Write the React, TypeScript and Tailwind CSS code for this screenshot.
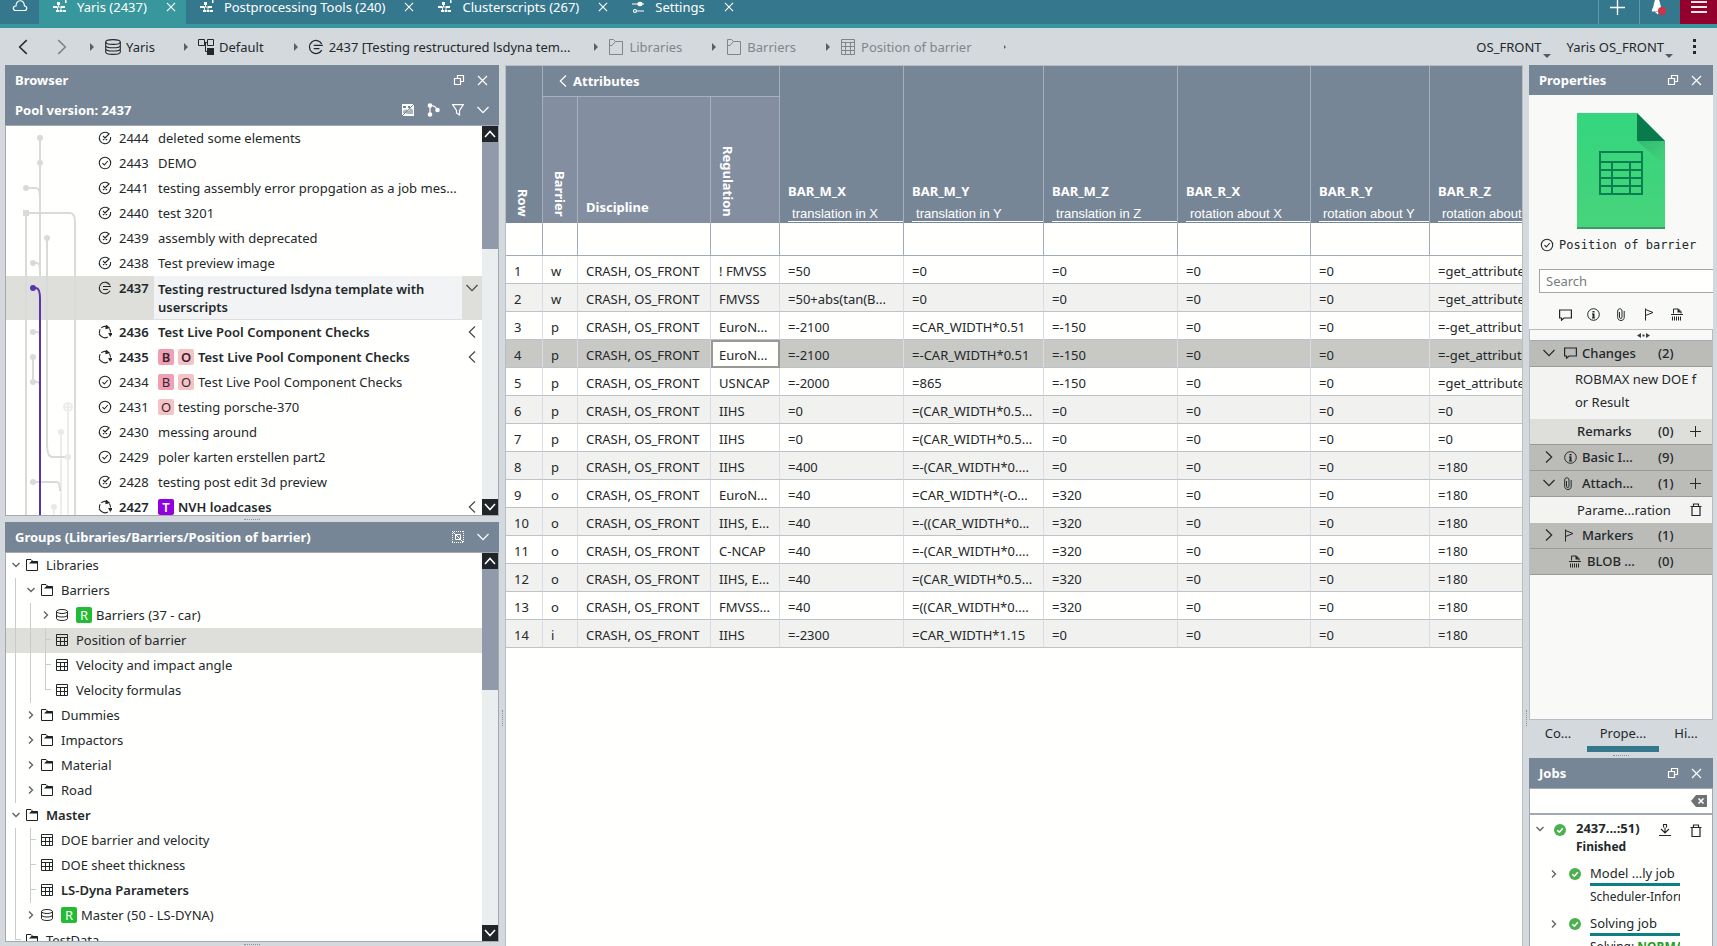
import React from "react";

type Status = "failed" | "ok" | "edit" | "live";

interface Tag {
  letter: string;
  className: string;
}

interface Version {
  id: number;
  name: string;
  status: Status;
  tags?: Tag[];
  bold?: boolean;
  collapsed?: boolean;
}

interface TreeItem {
  label: string;
  icon: "folder" | "table" | "db";
  guides: number;
  toggle: "open" | "closed" | "branch" | "last";
  tag?: boolean;
  bold?: boolean;
  selected?: boolean;
}

const tagB = { letter: "B", className: "bg-[#f19fb5] text-[#3a2530]" };
const tagO = { letter: "O", className: "bg-[#f5c3c6] text-[#3a2530]" };
const tagT = { letter: "T", className: "bg-[#9300e0] text-white" };

const versions: Version[] = [
  { id: 2444, name: "deleted some elements", status: "failed" },
  { id: 2443, name: "DEMO", status: "ok" },
  { id: 2441, name: "testing assembly error propgation as a job mes...", status: "failed" },
  { id: 2440, name: "test 3201", status: "failed" },
  { id: 2439, name: "assembly with deprecated", status: "failed" },
  { id: 2438, name: "Test preview image", status: "failed" },
  { id: 2437, name: "Testing restructured lsdyna template with userscripts", status: "edit", bold: true },
  { id: 2436, name: "Test Live Pool Component Checks", status: "live", bold: true, collapsed: true },
  { id: 2435, name: "Test Live Pool Component Checks", status: "live", tags: [tagB, tagO], bold: true, collapsed: true },
  { id: 2434, name: "Test Live Pool Component Checks", status: "ok", tags: [tagB, tagO] },
  { id: 2431, name: "testing porsche-370", status: "ok", tags: [tagO] },
  { id: 2430, name: "messing around", status: "failed" },
  { id: 2429, name: "poler karten erstellen part2", status: "ok" },
  { id: 2428, name: "testing post edit 3d preview", status: "failed" },
  { id: 2427, name: "NVH loadcases", status: "live", tags: [tagT], bold: true, collapsed: true },
];

const tree: TreeItem[] = [
  { label: "Libraries", icon: "folder", guides: 0, toggle: "open" },
  { label: "Barriers", icon: "folder", guides: 1, toggle: "open" },
  { label: "Barriers (37 - car)", icon: "db", guides: 2, toggle: "closed", tag: true },
  { label: "Position of barrier", icon: "table", guides: 2, toggle: "branch", selected: true },
  { label: "Velocity and impact angle", icon: "table", guides: 2, toggle: "branch" },
  { label: "Velocity formulas", icon: "table", guides: 2, toggle: "last" },
  { label: "Dummies", icon: "folder", guides: 1, toggle: "closed" },
  { label: "Impactors", icon: "folder", guides: 1, toggle: "closed" },
  { label: "Material", icon: "folder", guides: 1, toggle: "closed" },
  { label: "Road", icon: "folder", guides: 1, toggle: "closed" },
  { label: "Master", icon: "folder", guides: 0, toggle: "open", bold: true },
  { label: "DOE barrier and velocity", icon: "table", guides: 1, toggle: "branch" },
  { label: "DOE sheet thickness", icon: "table", guides: 1, toggle: "branch" },
  { label: "LS-Dyna Parameters", icon: "table", guides: 1, toggle: "branch", bold: true },
  { label: "Master (50 - LS-DYNA)", icon: "db", guides: 1, toggle: "closed", tag: true },
  { label: "TestData", icon: "folder", guides: 0, toggle: "last" },
];

const valueColumns = [
  ["BAR_M_X", "translation in X"],
  ["BAR_M_Y", "translation in Y"],
  ["BAR_M_Z", "translation in Z"],
  ["BAR_R_X", "rotation about X"],
  ["BAR_R_Y", "rotation about Y"],
  ["BAR_R_Z", "rotation about Z"],
];

const rows = [
  ["w", "! FMVSS", "=50", "=0", "=0", "=0", "=0", "=get_attribute("],
  ["w", "FMVSS", "=50+abs(tan(B...", "=0", "=0", "=0", "=0", "=get_attribute("],
  ["p", "EuroN...", "=-2100", "=CAR_WIDTH*0.51", "=-150", "=0", "=0", "=-get_attribute("],
  ["p", "EuroN...", "=-2100", "=-CAR_WIDTH*0.51", "=-150", "=0", "=0", "=-get_attribute("],
  ["p", "USNCAP", "=-2000", "=865", "=-150", "=0", "=0", "=get_attribute("],
  ["p", "IIHS", "=0", "=(CAR_WIDTH*0.5...", "=0", "=0", "=0", "=0"],
  ["p", "IIHS", "=0", "=(CAR_WIDTH*0.5...", "=0", "=0", "=0", "=0"],
  ["p", "IIHS", "=400", "=-(CAR_WIDTH*0....", "=0", "=0", "=0", "=180"],
  ["o", "EuroN...", "=40", "=CAR_WIDTH*(-O...", "=320", "=0", "=0", "=180"],
  ["o", "IIHS, E...", "=40", "=-((CAR_WIDTH*0...", "=320", "=0", "=0", "=180"],
  ["o", "C-NCAP", "=40", "=-(CAR_WIDTH*0....", "=320", "=0", "=0", "=180"],
  ["o", "IIHS, E...", "=40", "=(CAR_WIDTH*0.5...", "=320", "=0", "=0", "=180"],
  ["o", "FMVSS...", "=40", "=((CAR_WIDTH*0....", "=320", "=0", "=0", "=180"],
  ["i", "IIHS", "=-2300", "=CAR_WIDTH*1.15", "=0", "=0", "=0", "=180"],
];

/* ---------- icons ---------- */

const CloseIcon = ({ className = "w-[11px] h-[11px]" }) => (
  <svg viewBox="0 0 11 11" className={className} fill="none" stroke="currentColor" strokeWidth="1.2">
    <path d="M1 1l9 9M10 1l-9 9" />
  </svg>
);

const RestoreIcon = () => (
  <svg viewBox="0 0 12 12" className="w-[12px] h-[12px]" fill="none" stroke="currentColor" strokeWidth="1.2">
    <path d="M4.5 4.5V1.5h6v6h-3M1.5 4.5h6v6h-6z" />
  </svg>
);

const ChevronDown = ({ className = "w-[12px] h-[8px]" }) => (
  <svg viewBox="0 0 12 8" className={className} fill="none" stroke="currentColor" strokeWidth="1.2">
    <path d="M0.5 1L6 6.7 11.5 1" />
  </svg>
);

const ChevronRight = ({ className = "w-[8px] h-[12px]" }) => (
  <svg viewBox="0 0 8 12" className={className} fill="none" stroke="currentColor" strokeWidth="1.2">
    <path d="M1 0.5L6.7 6 1 11.5" />
  </svg>
);

const ChevronLeft = ({ className = "w-[8px] h-[12px]" }) => (
  <svg viewBox="0 0 8 12" className={className} fill="none" stroke="currentColor" strokeWidth="1.2">
    <path d="M7 0.5L1.3 6 7 11.5" />
  </svg>
);

const SmallDown = () => (
  <svg viewBox="0 0 8 6" className="w-2 h-[6px]" fill="none" stroke="currentColor" strokeWidth="1.4">
    <path d="M0.5 1L4 4.500 7.500 1" />
  </svg>
);

const SmallRight = () => (
  <svg viewBox="0 0 6 8" className="w-[6px] h-2" fill="none" stroke="currentColor" strokeWidth="1.4">
    <path d="M1 0.5L4.500 4 1 7.500" />
  </svg>
);

const ClusterIcon = () => (
  <svg viewBox="0 0 14 14" className="w-[14px] h-[14px]" fill="currentColor">
    <path d="M12 0h1.500v3H12zM4 2h3v3H4zM0 6h4v2H0zM8 6h4v2H8zM3 10h3v2H3zM10 10h3v2h-3zM7 10h2v2H7z" />
    <path d="M5.500 4v3M2 7h8M4.500 7v4M8 7v4M4.500 11h7" fill="none" stroke="currentColor" strokeWidth="0.900" />
  </svg>
);

const SettingsIcon = () => (
  <svg viewBox="0 0 13 14" className="w-[13px] h-[14px]" fill="none" stroke="currentColor" strokeWidth="1.2">
    <path d="M0 4h12M5 11h7" />
    <path d="M6 4a2 1.7 0 014 0a2 1.7 0 01-4 0z" fill="currentColor" />
    <circle cx="3" cy="11" r="1.5" />
  </svg>
);

const DatabaseIcon = ({ className = "w-[16px] h-[16px]" }) => (
  <svg viewBox="0 0 16 16" className={className} fill="none" stroke="currentColor" strokeWidth="1.1">
    <ellipse cx="8" cy="3" rx="7.3" ry="2.4" />
    <path d="M0.7 3v10c0 1.3 3 2.4 7.3 2.4s7.3-1.1 7.3-2.4V3M0.7 6.4C.7 7.700 3.700 8.700 8 8.700s7.300-1 7.300-2.300M0.700 9.700c0 1.300 3 2.300 7.300 2.300s7.300-1 7.300-2.300" />
  </svg>
);

const SmallDbIcon = () => (
  <svg viewBox="0 0 12 12" className="w-[12px] h-[12px] text-[#23282b]" fill="none" stroke="currentColor">
    <ellipse cx="6" cy="2.5" rx="5.500" ry="2" />
    <path d="M0.500 2.500v7c0 1.200 2.400 2 5.500 2s5.500-.8 5.500-2v-7M0.500 6c0 1.200 2.400 2 5.500 2s5.500-.8 5.500-2" />
  </svg>
);

const FolderIcon = () => (
  <svg viewBox="0 0 12 12" className="w-[12px] h-[12px] text-[#1d2225]">
    <path d="M0.500 11.500V0.500h4.500l2 2h4.500v9z" fill="none" stroke="currentColor" />
    <path d="M1 4.500h2L5.500 2h6v2.500z" fill="currentColor" />
  </svg>
);

const FolderOutline = () => (
  <svg viewBox="0 0 16 16" className="w-[16px] h-[16px]" fill="none" stroke="currentColor">
    <path d="M1.500 15.500V0.500h4l2 2h7v13zM1.500 6.500h2.500L7.500 2.500" />
  </svg>
);

const TableIcon = () => (
  <svg viewBox="0 0 12 12" className="w-[12px] h-[12px]" fill="none" stroke="currentColor">
    <path d="M0.500 0.500h11v11h-11zM0.500 3.500h11M0.500 7.500h11M4.500 3.500v8M8.500 3.500v8" />
  </svg>
);

const TableOutline = () => (
  <svg viewBox="0 0 16 16" className="w-[16px] h-[16px]" fill="none" stroke="currentColor">
    <path d="M1.500 0.500h13v15h-13zM1.500 3.500h13M1.500 7.500h13M1.500 11.500h13M5.500 3.500v12M10.500 3.500v12" />
  </svg>
);

const StatusIcon = ({ status, className = "w-[14px] h-[14px]" }: { status: Status; className?: string }) => (
  <svg viewBox="0 0 14 14" className={className} fill="none" stroke="currentColor" strokeWidth="1.1">
    {status === "ok" && (
      <>
        <circle cx="7" cy="7" r="5.700" />
        <path d="M4.500 7.200l1.800 1.800L9.800 5" />
      </>
    )}
    {status === "failed" && (
      <>
        <path d="M10.500 2.500A5.700 5.700 0 1 0 12.600 6M5 5l4 4M5 9l6.500-6.500" />
      </>
    )}
    {status === "edit" && <path d="M12 4.300A5.700 5.700 0 1 0 12 9.700M5 5.500h8M5 8.500h5" />}
    {status === "live" && (
      <>
        <path d="M3.300 2.900A5.500 5.500 0 0 1 9.300 1.900M1.700 8.700A5.500 5.500 0 0 1 2.200 4.300M9.800 12.100A5.500 5.500 0 0 1 3.500 11.400M11.300 3.500A5.500 5.500 0 0 1 12.400 7.500" />
        <path d="M8.300 0.500l2.700 2.200L8 3.500zM11 8.500l1.300 2.500L14 8.500zM1 9l2.800 2.800" fill="currentColor" />
      </>
    )}
  </svg>
);

const CommentIcon = () => (
  <svg viewBox="0 0 13 12" className="w-[13px] h-[12px]" fill="none" stroke="currentColor" strokeWidth="1.2">
    <path d="M0.600 1h11.800v8H5L2.500 11.200V9H0.600z" />
  </svg>
);

const InfoIcon = () => (
  <svg viewBox="0 0 13 13" className="w-[13px] h-[13px]" fill="none" stroke="currentColor">
    <circle cx="6.500" cy="6.500" r="5.800" />
    <path d="M6.500 5.500v4.500M6.500 3v1.500" strokeWidth="2" />
    <path d="M5 10h3M5 6h1.500" />
  </svg>
);

const ClipIcon = () => (
  <svg viewBox="0 0 8 13" className="w-[8px] h-[13px]" fill="none" stroke="currentColor">
    <path d="M2.500 4v5.200c0 1.800 2.500 1.800 2.500 0V3c0-3-4.300-3-4.300 0v6.500c0 4 6.500 4 6.500 0V3" />
  </svg>
);

const FlagIcon = () => (
  <svg viewBox="0 0 10 13" className="w-[10px] h-[13px]" fill="none" stroke="currentColor">
    <path d="M1.500 0.500v12M1.500 1.500L9 4.500 1.500 7.500" />
  </svg>
);

const ShredIcon = () => (
  <svg viewBox="0 0 12 13" className="w-[12px] h-[13px]" fill="none" stroke="currentColor">
    <path d="M2.500 5.500V1h5l2.500 2.500v2M0 6.500h12M1.500 8.500v4M3.500 8.500v4M5.500 8.500v4M7.500 8.500v4M9.500 8.500v4" />
    <path d="M6.500 0.500L10.500 4.500h-4z" fill="currentColor" stroke="none" />
  </svg>
);

const TrashIcon = () => (
  <svg viewBox="0 0 12 13" className="w-[12px] h-[13px]" fill="none" stroke="currentColor" strokeWidth="1.200">
    <path d="M0.500 3.500h11M3.500 3V1h5v2M2 3.500v9h8v-9" />
  </svg>
);

const PlusIcon = ({ className = "w-[11px] h-[11px]" }) => (
  <svg viewBox="0 0 11 11" className={className} fill="none" stroke="currentColor">
    <path d="M5.500 0v11M0 5.500h11" />
  </svg>
);

const DoneIcon = () => (
  <svg viewBox="0 0 12 12" className="w-[12px] h-[12px]">
    <circle cx="6" cy="6" r="6" fill="#4caf50" />
    <path d="M3.300 6.200l2 2 3.500-4" fill="none" stroke="#fff" strokeWidth="1.600" />
  </svg>
);

const SheetIcon = () => (
  <svg viewBox="0 0 88 116" className="w-[88px] h-[116px]">
    <defs>
      <linearGradient id="sheet" x1="0" y1="0" x2="0" y2="1">
        <stop offset="0" stopColor="#33d67e" />
        <stop offset="1" stopColor="#48d37b" />
      </linearGradient>
      <linearGradient id="fold" x1="0" y1="0" x2="1" y2="1">
        <stop offset="0" stopColor="#2fae6b" />
        <stop offset="1" stopColor="#48d37b" />
      </linearGradient>
    </defs>
    <path d="M0 0h60l28 28v88H0z" fill="url(#sheet)" />
    <path d="M60 28h28v24z" fill="url(#fold)" opacity="0.700" />
    <path d="M60 0l28 28H60z" fill="#097a4c" />
    <path d="M0 115h88" stroke="#3a9c68" strokeWidth="2" />
    <path
      d="M23 39h42v42H23zM23 49h42M23 57h42M23 65h42M23 73h42M35 49v32M53 49v32"
      fill="none"
      stroke="#06804f"
      strokeWidth="2"
    />
  </svg>
);

/* ---------- shared bits ---------- */

const Crumb = () => <span className="w-0 h-0 border-y-4 border-y-transparent border-l-4 border-l-[#5a6065]" />;

const DropMark = () => (
  <span className="self-end ml-px mb-[7px] w-0 h-0 border-x-4 border-x-transparent border-t-4 border-t-[#555b60]" />
);

const DotsH = () => <span className="w-4 border-t border-dotted border-[#8b9197]" />;
const DotsV = () => <span className="h-4 border-l border-dotted border-[#8b9197]" />;

const PanelHeader = ({ title }: { title: string }) => (
  <header className="flex items-center h-[30px] shrink-0 bg-[#778696] text-white pl-[10px] pr-[11px]">
    <h2 className="font-bold flex-1">{title}</h2>
    <button aria-label={`Detach ${title}`} className="mr-3">
      <RestoreIcon />
    </button>
    <button aria-label={`Close ${title}`}>
      <CloseIcon />
    </button>
  </header>
);

const Scrollbar = ({ thumb }: { thumb: string }) => (
  <div className="w-4 shrink-0 flex flex-col bg-[#ebeeee]">
    <button aria-label="Scroll up" className="h-4 shrink-0 bg-[#1f2529] text-white flex items-center justify-center">
      <svg viewBox="0 0 12 8" className="w-[12px] h-[8px]" fill="none" stroke="currentColor" strokeWidth="1.600">
        <path d="M1 7l5-5.500L11 7" />
      </svg>
    </button>
    <div className={`${thumb} bg-[#909aaa]`} />
    <div className="flex-1" />
    <button aria-label="Scroll down" className="h-4 shrink-0 bg-[#1f2529] text-white flex items-center justify-center">
      <svg viewBox="0 0 12 8" className="w-[12px] h-[8px]" fill="none" stroke="currentColor" strokeWidth="1.600">
        <path d="M1 1l5 5.500L11 1" />
      </svg>
    </button>
  </div>
);

const TagBadge = ({ letter, className }: Tag) => (
  <span className={`w-4 h-4 mr-1 shrink-0 rounded-[2px] flex items-center justify-center leading-4 ${className}`}>
    {letter}
  </span>
);

/* ---------- top ---------- */

const Tab = ({ label, active, icon }: { label: string; active?: boolean; icon?: React.ReactNode }) => (
  <div className={`flex h-6 items-start pl-[14px] pr-[10px] ${active ? "bg-[#38969d]" : ""}`}>
    <div className="flex items-center h-[14px]">
      {icon ?? <ClusterIcon />}
      <button className="ml-[10px] mr-[19px] leading-[14px] whitespace-nowrap">{label}</button>
      <button aria-label={`Close ${label}`}>
        <CloseIcon className="w-[10px] h-[10px]" />
      </button>
    </div>
  </div>
);

const TopBar = () => (
  <div className="flex h-7 shrink-0 bg-[#35778d] border-b-4 border-[#38969d] text-white">
    <button aria-label="Home" className="w-[39px] flex justify-center items-start">
      <svg viewBox="0 0 16 12" className="w-4 h-3" fill="none" stroke="currentColor" strokeWidth="1.200">
        <path d="M3.500 10.500h9c3 0 3-4.500 0-4.500C12 -1 4 -1 4 6c-4 0-3 4.500-.5 4.500z" />
      </svg>
    </button>
    <Tab label="Yaris (2437)" active />
    <Tab label="Postprocessing Tools (240)" />
    <Tab label="Clusterscripts (267)" />
    <Tab label="Settings" icon={<SettingsIcon />} />
    <div className="flex-1" />
    <button aria-label="New tab" className="w-[41px] pr-1 flex justify-center items-start border-l border-[#5f9cab]">
      <PlusIcon className="w-[15px] h-[15px]" />
    </button>
    <button aria-label="Notifications" className="w-[41px] pr-1 flex justify-center items-start border-l border-[#5f9cab]">
      <svg viewBox="0 0 16 16" className="w-4 h-4">
        <path d="M5 0h4c1.500 3 1.500 7 3 9.500v2H2V9.500C4 7 3.500 3 5 0zM5 12h4l-1 2.500z" fill="#fff" />
        <circle cx="12" cy="11" r="4" fill="#d0324a" />
      </svg>
    </button>
    <button aria-label="Menu" className="w-[37px] flex justify-center items-start bg-[#93002d]">
      <svg viewBox="0 0 16 14" className="w-4 h-[14px]" stroke="#f3e6ea" strokeWidth="2">
        <path d="M0 2h16M0 7h16M0 12h16" />
      </svg>
    </button>
  </div>
);

const Breadcrumbs = () => (
  <nav className="flex items-center h-[37px] shrink-0 pl-[18px] pr-5">
    <button aria-label="Back">
      <ChevronLeft className="w-[10px] h-[16px]" />
    </button>
    <button aria-label="Forward" className="ml-[29px] mr-[23px] text-[#7d8287]">
      <ChevronRight className="w-[10px] h-[16px]" />
    </button>
    <Crumb />
    <a href="#yaris" className="flex items-center gap-[5px] ml-[11px] mr-[29px]">
      <DatabaseIcon />
      Yaris
    </a>
    <Crumb />
    <a href="#default" className="flex items-center gap-[5px] ml-[10px] mr-[30px]">
      <svg viewBox="0 0 16 16" className="w-4 h-4" fill="none" stroke="currentColor">
        <path d="M0.500 0.500h6v6h-6zM9.500 0.500h6v6h-6zM6.500 3.500h3M7.500 3.500v9h2" />
        <path d="M9 9h7v7H9z" fill="currentColor" stroke="none" />
      </svg>
      Default
    </a>
    <Crumb />
    <a href="#version" className="flex items-center gap-[5px] ml-[10px] mr-6">
      <StatusIcon status="edit" className="w-4 h-4" />
      2437 [Testing restructured lsdyna tem...
    </a>
    <Crumb />
    <a href="#libraries" className="flex items-center gap-[5px] ml-[10px] mr-[30px] text-[#80858a]">
      <FolderOutline />
      Libraries
    </a>
    <Crumb />
    <a href="#barriers" className="flex items-center gap-[5px] ml-[10px] mr-[30px] text-[#80858a]">
      <FolderOutline />
      Barriers
    </a>
    <Crumb />
    <a href="#position" className="flex items-center gap-[5px] ml-[10px] mr-8 text-[#80858a]">
      <TableOutline />
      Position of barrier
    </a>
    <span className="w-0 h-0 border-y-2 border-y-transparent border-l-2 border-l-[#5a6065]" />
    <div className="flex-1" />
    <button className="flex items-center h-full">
      OS_FRONT
      <DropMark />
    </button>
    <button className="flex items-center h-full ml-4">
      Yaris OS_FRONT
      <DropMark />
    </button>
    <button aria-label="More" className="ml-5">
      <svg viewBox="0 0 4 16" className="w-1 h-4" fill="currentColor">
        <path d="M0 0h3v3H0zM0 6h3v3H0zM0 12h3v3H0z" />
      </svg>
    </button>
  </nav>
);

/* ---------- left column ---------- */

const VersionGraph = () => (
  <svg viewBox="0 0 90 389" className="absolute left-0 top-0 w-[90px] h-[389px]" fill="none" strokeWidth="2">
    <g stroke="#ededeb">
      <path d="M62 286v103M55 306v83M48 381v8" />
      <circle cx="62" cy="281" r="4" fill="#fff" />
      <path d="M59 281h6M62 278v6" />
    </g>
    <g stroke="#dadad8">
      <path d="M34 12v138M20 62h10q4 0 4 10M20 87v302M20 87h44q5 0 5 10v292" />
      <path d="M41 112v205q0 14 5 14h14M27 137h4q3 0 3 9M27 206h4q3 0 3 6M27 231v25h4q3 0 3 6M27 356h24q3 0 3 9" />
    </g>
    <g fill="#dadad8">
      <circle cx="34" cy="12" r="3" />
      <circle cx="34" cy="37" r="3" />
      <circle cx="20" cy="62" r="3" />
      <path d="M17 84h6v6h-6z" />
      <circle cx="41" cy="112" r="3" />
      <circle cx="27" cy="137" r="3" />
      <circle cx="27" cy="206" r="3" />
      <circle cx="27" cy="231" r="3" />
      <circle cx="27" cy="256" r="3" />
      <circle cx="27" cy="356" r="3" />
    </g>
    <g fill="#e9e9e7">
      <circle cx="55" cy="306" r="3" />
      <circle cx="62" cy="331" r="3" />
      <circle cx="48" cy="381" r="3" />
    </g>
    <path d="M27 162h3q4 0 4 11v216" stroke="#5b35ae" />
    <circle cx="27" cy="162" r="3" fill="#5b35ae" />
  </svg>
);

const VersionRow = ({ version }: { version: Version }) => {
  const selected = version.id === 2437;
  return (
    <li
      className={`flex pl-[92px] shrink-0 ${selected ? "h-11 bg-[#dededb]" : "h-[25px]"} ${
        version.bold ? "font-semibold" : ""
      }`}
    >
      <div className="flex items-center h-6 w-14">
        <StatusIcon status={version.status} />
        <span className="ml-[7px]">{version.id}</span>
      </div>
      {selected ? (
        <p className="flex-1 h-[43px] bg-[#f1f3f4] pl-1 pt-1 leading-[18px]">{version.name}</p>
      ) : (
        <div className="flex-1 flex items-center h-6 pl-1 whitespace-nowrap">
          {version.tags?.map((tag) => (
            <TagBadge key={tag.letter} {...tag} />
          ))}
          {version.name}
        </div>
      )}
      <div className="w-5 h-6 flex items-center justify-center text-[#44494d]">
        {selected && <ChevronDown />}
        {version.collapsed && <ChevronLeft />}
      </div>
    </li>
  );
};

const BrowserPanel = () => (
  <section className="flex flex-col h-[451px] shrink-0">
    <PanelHeader title="Browser" />
    <div className="flex items-center h-[30px] shrink-0 bg-[#778696] text-white px-[10px]">
      <h3 className="font-bold flex-1">Pool version: 2437</h3>
      <button aria-label="Preview image">
        <svg viewBox="0 0 14 14" className="w-[14px] h-[14px]">
          <path d="M1 1h12v12H1z" fill="#fff" />
          <path d="M2 10V8l3-2 2 2 3-3 2 2v4H8z" fill="#a9b3be" />
          <path d="M2 3h3v2H2zM7 3h2v2H7z" fill="#778696" />
          <path d="M0 14L14 0" stroke="#778696" />
        </svg>
      </button>
      <button aria-label="Graph" className="ml-[11px]">
        <svg viewBox="0 0 14 14" className="w-[14px] h-[14px]" fill="currentColor">
          <circle cx="4" cy="2.500" r="2.300" />
          <circle cx="4" cy="11.500" r="2.300" />
          <circle cx="11.500" cy="7" r="2.300" />
          <path d="M4 3v8M4 2.500c4 0 6 1 7 4" fill="none" stroke="currentColor" strokeWidth="1.200" />
        </svg>
      </button>
      <button aria-label="Filter" className="ml-3">
        <svg viewBox="0 0 12 12" className="w-[12px] h-[12px]" fill="none" stroke="currentColor" strokeWidth="1.200">
          <path d="M0.600 0.600h10.800L7.500 6.500V11L4.500 9V6.500z" />
        </svg>
      </button>
      <button aria-label="Expand" className="ml-[13px]">
        <ChevronDown />
      </button>
    </div>
    <div className="flex flex-1 min-h-0 border border-[#a3a9af] bg-[#fffffd]">
      <div className="relative flex-1 overflow-hidden">
        <ul className="flex flex-col">
          {versions.map((version) => (
            <VersionRow key={version.id} version={version} />
          ))}
        </ul>
        <VersionGraph />
      </div>
      <Scrollbar thumb="h-[107px]" />
    </div>
  </section>
);

const TreeToggle = ({ toggle }: { toggle: TreeItem["toggle"] }) => {
  if (toggle === "open")
    return (
      <button aria-label="Collapse" className="w-[15px] flex justify-center text-[#5f656a]">
        <SmallDown />
      </button>
    );
  if (toggle === "closed")
    return (
      <button aria-label="Expand" className="w-[15px] flex justify-center text-[#5f656a]">
        <SmallRight />
      </button>
    );
  return (
    <span className="w-[15px] h-[25px] pl-[7px]">
      <span className="block h-3 border-l border-b border-[#c9cbce] w-[6px]" />
      {toggle === "branch" && <span className="block h-[13px] border-l border-[#c9cbce]" />}
    </span>
  );
};

const TreeRow = ({ item }: { item: TreeItem }) => (
  <li
    className={`flex items-center h-[25px] shrink-0 pl-[2px] pb-px whitespace-nowrap ${
      item.selected ? "bg-[#dededb]" : ""
    } ${item.bold ? "font-semibold" : ""}`}
  >
    {Array.from({ length: item.guides }, (_, i) => (
      <span key={i} className="w-[15px] h-[25px] pl-[7px]">
        <span className="block h-full border-l border-[#c9cbce]" />
      </span>
    ))}
    <TreeToggle toggle={item.toggle} />
    <span className="ml-[3px] mr-2">
      {item.icon === "folder" && <FolderIcon />}
      {item.icon === "table" && <TableIcon />}
      {item.icon === "db" && <SmallDbIcon />}
    </span>
    {item.tag && <TagBadge letter="R" className="bg-[#22bb33] text-white" />}
    {item.label}
  </li>
);

const GroupsPanel = () => (
  <section className="flex flex-col flex-1 min-h-0">
    <header className="flex items-center h-[30px] shrink-0 bg-[#778696] text-white px-[10px]">
      <h2 className="font-bold flex-1">Groups (Libraries/Barriers/Position of barrier)</h2>
      <button aria-label="Highlight selection" className="mr-[13px]">
        <svg viewBox="0 0 12 12" className="w-[12px] h-[12px]" fill="none" stroke="currentColor">
          <path d="M0 0.500h12M0 11.500h12M0.500 0v12M11.500 0v12" strokeDasharray="1 1" />
          <path d="M3.500 3.500h5v5h-5zM1 1l10 10" />
        </svg>
      </button>
      <button aria-label="Expand groups">
        <ChevronDown />
      </button>
    </header>
    <div className="flex flex-1 min-h-0 border border-[#a3a9af] bg-[#fffffd]">
      <ul className="flex flex-col flex-1 overflow-hidden">
        {tree.map((item) => (
          <TreeRow key={item.label} item={item} />
        ))}
      </ul>
      <Scrollbar thumb="h-[121px]" />
    </div>
  </section>
);

/* ---------- table ---------- */

const headCell = "border-r border-[#a6b1bc] align-bottom text-left font-bold";
const bodyCell = "border-r border-r-[#d9dde3] border-b border-b-[#bbc3c9] pl-2 pt-[2px] whitespace-nowrap overflow-hidden";

const VerticalLabel = ({ children }: { children: string }) => (
  <span className="inline-block [writing-mode:vertical-rl] leading-[18px]">{children}</span>
);

const BarrierTable = () => (
  <main className="flex-1 min-w-0 overflow-hidden border-x border-t border-[#b7bec5] bg-[#fffffd]">
    <table className="table-fixed border-separate border-spacing-0 w-[1064px]">
      <colgroup>
        <col className="w-[37px]" />
        <col className="w-[35px]" />
        <col className="w-[133px]" />
        <col className="w-[69px]" />
        <col className="w-[124px]" />
        <col className="w-[140px]" />
        <col className="w-[134px]" />
        <col className="w-[133px]" />
        <col className="w-[119px]" />
        <col className="w-[140px]" />
      </colgroup>
      <thead className="text-white">
        <tr className="h-[31px]">
          <th rowSpan={2} className={`${headCell} bg-[#778696] pl-2 pb-px`}>
            <VerticalLabel>Row</VerticalLabel>
          </th>
          <th colSpan={3} className={`${headCell} bg-[#778696] border-b`}>
            <div className="flex items-center h-[30px] pl-4 gap-[6px]">
              <ChevronLeft />
              Attributes
            </div>
          </th>
          {valueColumns.map(([name, hint]) => (
            <th key={name} rowSpan={2} className={`${headCell} bg-[#778696] pl-2 pb-px overflow-hidden`}>
              <div className="leading-4 mb-2">{name}</div>
              <div className="border-b border-white pl-1 leading-[14px] font-normal font-['Liberation_Sans',Arial,sans-serif] whitespace-nowrap">
                {hint}
              </div>
            </th>
          ))}
        </tr>
        <tr className="h-[126px]">
          <th className={`${headCell} bg-[#838fa0] pl-2 pb-px`}>
            <VerticalLabel>Barrier</VerticalLabel>
          </th>
          <th className={`${headCell} bg-[#838fa0] pl-2 pb-2 leading-4`}>Discipline</th>
          <th className={`${headCell} bg-[#838fa0] pl-2 pb-px`}>
            <VerticalLabel>Regulation</VerticalLabel>
          </th>
        </tr>
      </thead>
      <tbody>
        <tr className="h-[33px]">
          {Array.from({ length: 10 }, (_, i) => (
            <td key={i} className="border-r border-b border-[#a3abb5]" />
          ))}
        </tr>
        {rows.map(([barrier, regulation, ...values], i) => {
          const selected = i === 3;
          const bg = selected ? "bg-[#c8c8c5]" : i % 2 ? "bg-[#f1f1ef]" : "bg-[#fffffd]";
          return (
            <tr key={i} className={`h-7 ${bg}`}>
              <td className={bodyCell}>{i + 1}</td>
              <td className={bodyCell}>{barrier}</td>
              <td className={bodyCell}>CRASH, OS_FRONT</td>
              <td
                className={
                  selected ? "bg-[#fffffd] border-2 border-[#989894] pl-[6px] pt-px whitespace-nowrap" : bodyCell
                }
              >
                {regulation}
              </td>
              {values.map((value, j) => (
                <td key={j} className={bodyCell}>
                  {value}
                </td>
              ))}
            </tr>
          );
        })}
      </tbody>
    </table>
  </main>
);

/* ---------- right column ---------- */

interface SectionRowProps {
  label: string;
  count: number;
  icon?: React.ReactNode;
  toggle?: "open" | "closed";
  add?: boolean;
  light?: boolean;
}

const SectionRow = ({ label, count, icon, toggle, add, light }: SectionRowProps) => (
  <div
    className={`flex items-center h-[26px] pb-px border-b border-[#9a9b98] font-medium ${
      light ? "bg-[#dededb]" : "bg-[#bbbbb8]"
    }`}
  >
    <span className="w-[34px] flex justify-center pl-1">
      {toggle === "open" && <ChevronDown />}
      {toggle === "closed" && <ChevronRight />}
    </span>
    {icon && <span className={`w-[18px] flex shrink-0 ${toggle ? "" : "ml-[5px]"}`}>{icon}</span>}
    <span className={`flex-1 whitespace-nowrap ${light ? "pl-[13px]" : ""}`}>{label}</span>
    <span className="w-8">({count})</span>
    <span className="w-[22px]">
      {add && (
        <button aria-label={`Add to ${label}`} className="block">
          <PlusIcon />
        </button>
      )}
    </span>
  </div>
);

const PropertiesPanel = () => (
  <section className="flex flex-col h-[655px] shrink-0">
    <PanelHeader title="Properties" />
    <div className="h-[234px] shrink-0 bg-[#f9faf7] flex flex-col">
      <div className="pt-[18px] flex justify-center">
        <SheetIcon />
      </div>
      <div className="flex items-center gap-[5px] h-5 mt-[6px] pl-[11px] font-['DejaVu_Sans_Mono',monospace] text-[12px] whitespace-nowrap">
        <StatusIcon status="ok" />
        Position of barrier
      </div>
      <input
        aria-label="Search properties"
        placeholder="Search"
        className="ml-[10px] mt-[14px] h-6 border border-r-0 border-[#a3a6a6] bg-[#fffffd] pl-[6px] placeholder:text-[#777c80] outline-none"
      />
      <div className="flex items-center h-[35px] pt-2 pl-[22px]">
        <button aria-label="Changes" className="w-7 flex justify-center">
          <CommentIcon />
        </button>
        <button aria-label="Info" className="w-7 flex justify-center">
          <InfoIcon />
        </button>
        <button aria-label="Attachments" className="w-7 flex justify-center">
          <ClipIcon />
        </button>
        <button aria-label="Markers" className="w-7 flex justify-center">
          <FlagIcon />
        </button>
        <button aria-label="BLOB" className="w-7 flex justify-center">
          <ShredIcon />
        </button>
      </div>
    </div>
    <div className="flex-1 border border-[#b7bcc2] bg-[#f9faf7]">
      <div className="h-[11px] border-b border-[#a3abb5] flex items-center justify-center pl-11">
        <svg viewBox="0 0 13 5" className="w-[13px] h-[5px]" fill="#3a3f43">
          <path d="M0 2.500L4 0v5zM13 2.500L9 0v5zM5.500 1.500h2v2h-2z" />
        </svg>
      </div>
      <SectionRow label="Changes" count={2} icon={<CommentIcon />} toggle="open" />
      <p className="h-[52px] bg-[#f3f4f2] pl-[45px] pr-3 pt-px leading-[23px] break-all">ROBMAX new DOE for Result</p>
      <SectionRow label="Remarks" count={0} add light />
      <SectionRow label="Basic I..." count={9} icon={<InfoIcon />} toggle="closed" />
      <SectionRow label="Attach..." count={1} icon={<ClipIcon />} toggle="open" add />
      <div className="flex items-center h-[26px] pb-px bg-[#f3f4f2] pl-[47px] pr-[10px]">
        <span className="flex-1 whitespace-nowrap">Parame...ration</span>
        <button aria-label="Delete attachment">
          <TrashIcon />
        </button>
      </div>
      <SectionRow label="Markers" count={1} icon={<FlagIcon />} toggle="closed" />
      <SectionRow label="BLOB ..." count={0} icon={<ShredIcon />} />
    </div>
  </section>
);

const JobRow = ({ label, info }: { label: string; info: React.ReactNode }) => (
  <li className="flex h-[50px] pl-[21px] pr-8">
    <button aria-label={`Expand ${label}`} className="h-5 text-[#5f656a]">
      <SmallRight />
    </button>
    <span className="h-5 flex items-center ml-3 mr-[9px]">
      <DoneIcon />
    </span>
    <div className="flex-1 overflow-hidden whitespace-nowrap">
      <div className="h-[22px] leading-[18px] border-b-[3px] border-[#0f7f86]">{label}</div>
      <div className="text-[12px] leading-[22px]">{info}</div>
    </div>
  </li>
);

const JobsPanel = () => (
  <section className="flex flex-col flex-1 min-h-0 overflow-hidden">
    <PanelHeader title="Jobs" />
    <div className="flex items-center h-[27px] shrink-0 border border-b-2 border-[#a3a9b3] bg-[#fffffd] pr-[5px]">
      <input aria-label="Filter jobs" className="flex-1 min-w-0 outline-none" />
      <button aria-label="Clear filter">
        <svg viewBox="0 0 16 12" className="w-4 h-3">
          <path d="M0 6l5-6h11v12H5z" fill="#6e7275" />
          <path d="M7.500 3.500l5 5M12.500 3.500l-5 5" stroke="#fff" strokeWidth="1.600" />
        </svg>
      </button>
    </div>
    <div className="flex-1 border-x border-[#a3a9b3] bg-[#fffffd] pt-1">
      <div className="flex items-start h-[45px] pl-[6px] pr-[10px]">
        <button aria-label="Collapse job" className="h-5 text-[#5f656a]">
          <SmallDown />
        </button>
        <span className="h-[22px] flex items-center ml-[10px] mr-[10px]">
          <DoneIcon />
        </span>
        <div className="flex-1 font-bold whitespace-nowrap">
          <div className="leading-[18px]">2437...:51)</div>
          <div className="text-[12px] leading-5">Finished</div>
        </div>
        <button aria-label="Download" className="h-[22px] flex items-center mr-[19px]">
          <svg viewBox="0 0 12 12" className="w-[12px] h-[12px]" fill="none" stroke="currentColor" strokeWidth="1.100">
            <path d="M0 11.500h12M4.500 3.500v-3h3v3M6 3.500V9M2 5l4 4 4-4" />
          </svg>
        </button>
        <button aria-label="Delete job" className="h-[22px] flex items-center">
          <TrashIcon />
        </button>
      </div>
      <ul>
        <JobRow label="Model ...ly job" info="Scheduler-Information" />
        <JobRow
          label="Solving job"
          info={
            <>
              Solving: <b className="text-[#1fa01f]">NORMAL</b>
            </>
          }
        />
      </ul>
    </div>
  </section>
);

const App = () => (
  <div className="h-screen flex flex-col overflow-hidden bg-[#d4d9de] text-[#23282b] text-[13px] leading-5 font-['Noto_Sans',sans-serif]">
    <TopBar />
    <Breadcrumbs />
    <div className="flex flex-1 min-h-0 pl-[5px] pr-1">
      <div className="w-[494px] shrink-0 flex flex-col">
        <BrowserPanel />
        <div className="h-[6px] shrink-0 flex items-center justify-center">
          <DotsH />
        </div>
        <GroupsPanel />
        <div className="h-1 shrink-0 flex items-center justify-center">
          <DotsH />
        </div>
      </div>
      <div className="w-[6px] shrink-0 flex items-center justify-center pt-[425px]">
        <DotsV />
      </div>
      <BarrierTable />
      <div className="w-[6px] shrink-0 flex items-center justify-center pt-[425px]">
        <DotsV />
      </div>
      <aside className="w-[184px] shrink-0 flex flex-col">
        <PropertiesPanel />
        <div className="flex h-8 shrink-0">
          <button className="w-[58px] pb-[6px] whitespace-nowrap">Co...</button>
          <button className="w-[72px] border-b-[6px] border-[#35778d] whitespace-nowrap">Prope...</button>
          <button className="flex-1 pb-[6px] whitespace-nowrap">Hi...</button>
        </div>
        <div className="h-[6px] shrink-0 flex items-center justify-center">
          <DotsH />
        </div>
        <JobsPanel />
      </aside>
    </div>
  </div>
);

export default App;
